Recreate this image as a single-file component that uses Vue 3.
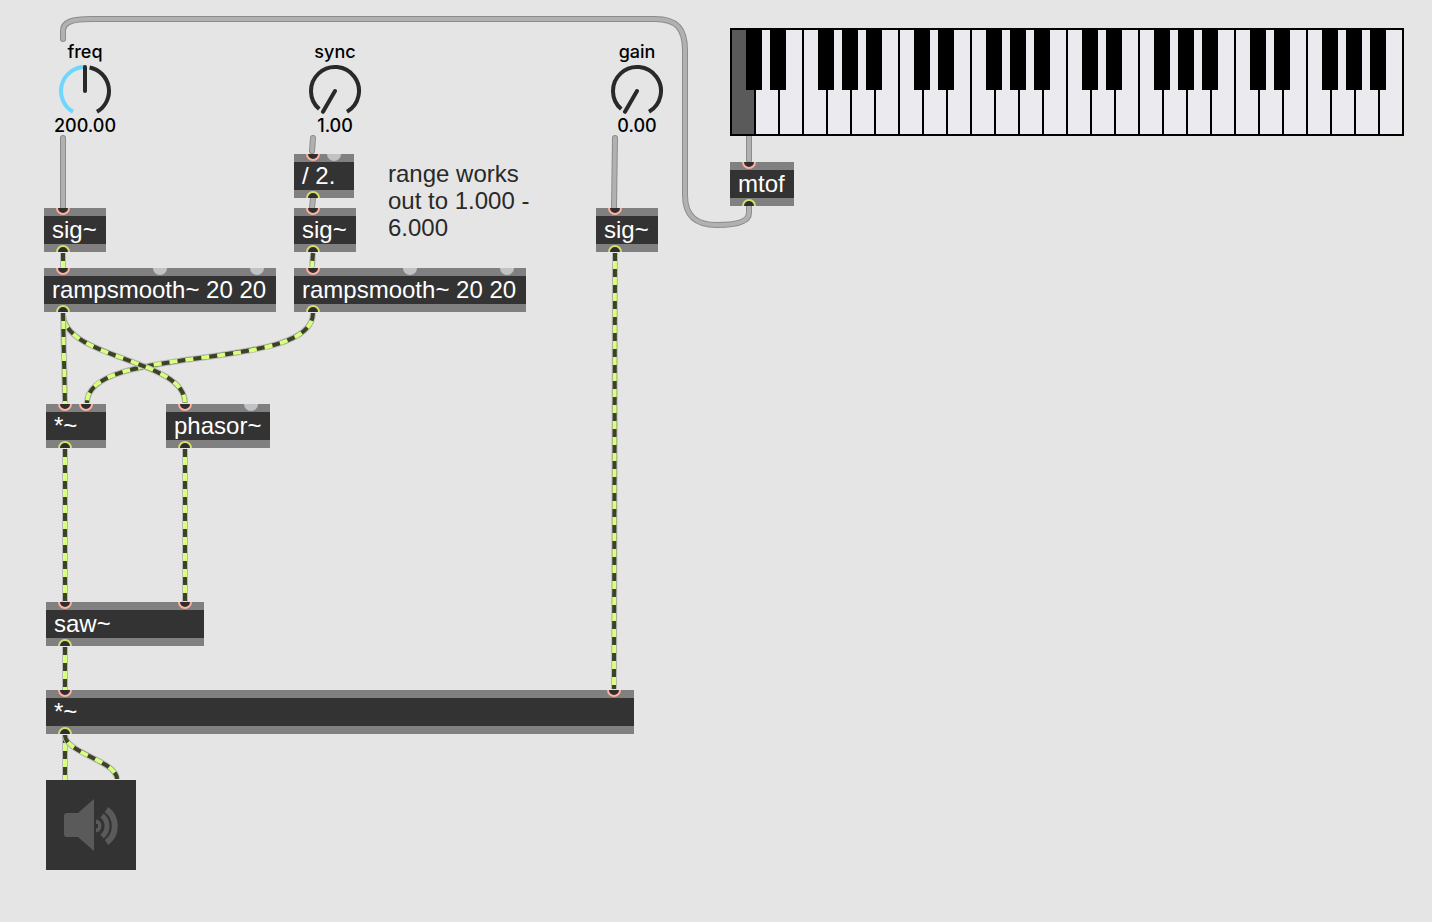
<script setup>
import { ref } from 'vue'

const dials = ref([
  { id: 'freq', x: 43, y: 41, min: 0, max: 400, value: 200 },
  { id: 'sync', x: 293, y: 41, min: 1, max: 11, value: 1 },
  { id: 'gain', x: 595, y: 41, min: 0, max: 1, value: 0 },
])

// Inlets and outlets are distances from the left edge of the box.
const boxes = [
  { text: '/ 2.', x: 294, y: 154, w: 60, ins: [19], idle: [40], outs: [19] },
  { text: 'sig~', x: 44, y: 208, w: 62, ins: [19], idle: [], outs: [19] },
  { text: 'sig~', x: 294, y: 208, w: 62, ins: [19], idle: [], outs: [19] },
  { text: 'sig~', x: 596, y: 208, w: 62, ins: [19], idle: [], outs: [19] },
  { text: 'rampsmooth~ 20 20', x: 44, y: 268, w: 232, ins: [19], idle: [116, 213], outs: [19] },
  { text: 'rampsmooth~ 20 20', x: 294, y: 268, w: 232, ins: [19], idle: [116, 213], outs: [19] },
  { text: '*~', x: 46, y: 404, w: 60, ins: [19, 40], idle: [], outs: [19] },
  { text: 'phasor~', x: 166, y: 404, w: 104, ins: [19], idle: [85], outs: [19] },
  { text: 'saw~', x: 46, y: 602, w: 158, ins: [19, 139], idle: [], outs: [19] },
  { text: '*~', x: 46, y: 690, w: 588, ins: [19, 568], idle: [], outs: [19] },
  { text: 'mtof', x: 730, y: 162, w: 64, ins: [19], idle: [], outs: [19] },
]

const controlCords = [
  'M749 206 V213 C749 222 735 225 717 225 C697 225 685 217 685 195 V50 C685 29 677 19 655 19 H91 C72 19 63 22 63 31 V39',
  'M63 138 V208',
  'M313 138 L312 151',
  'M313 198 L312 208',
  'M615 138 L614 208',
  'M749 130 V160',
]

const signalCords = [
  'M63 253 V268',
  'M313 253 L312 267',
  'M313 313 C313 373 87 343 87 403',
  'M63 313 C63 360 185 358 185 403',
  'M63 313 L65 403',
  'M65 449 V602',
  'M185 449 V602',
  'M65 647 V690',
  'M615 253 L614 689',
  'M65 735 V780',
  'M65 735 C65 753 117 761 117 779',
]

const keyCount = 28
const sharpSteps = [0, 1, 3, 4, 5]
const keys = Array.from({ length: keyCount }, (_, i) => ({
  n: i,
  sharp: sharpSteps.includes(i % 7),
}))
const held = ref(0)
const audioOn = ref(false)

function point(deg) {
  const a = (deg * Math.PI) / 180
  return `${(27 + 24 * Math.sin(a)).toFixed(2)} ${(27 - 24 * Math.cos(a)).toFixed(2)}`
}
function arc(from, to) {
  return `M${point(from)} A24 24 0 ${to - from > 180 ? 1 : 0} 1 ${point(to)}`
}
function angle(d) {
  return -150 + (300 * (d.value - d.min)) / (d.max - d.min)
}
function place(o) {
  return { left: o.x + 'px', top: o.y + 'px', width: o.w ? o.w + 'px' : null }
}
</script>

<template>
  <main class="patcher">
    <svg class="cords" aria-hidden="true">
      <g v-for="d in controlCords" :key="d">
        <path :d="d" class="control-edge" />
        <path :d="d" class="control-core" />
      </g>
      <g v-for="d in signalCords" :key="d">
        <path :d="d" class="signal-edge" />
        <path :d="d" class="signal-core" />
        <path :d="d" class="signal-dash" />
      </g>
    </svg>

    <label v-for="d in dials" :key="d.id" class="dial" :style="place(d)">
      <span>{{ d.id }}</span>
      <svg class="knob" viewBox="0 0 54 50" aria-hidden="true">
        <path :d="arc(angle(d) + 11, 150)" class="track" />
        <path v-if="angle(d) > -150" :d="arc(-150, angle(d))" class="fill" />
        <path :d="`M27 27 L${point(angle(d))}`" class="needle" />
      </svg>
      <output>{{ Number(d.value).toFixed(2) }}</output>
      <input v-model.number="d.value" type="range" :min="d.min" :max="d.max" step="0.01" />
    </label>

    <div v-for="(b, i) in boxes" :key="i" class="box" :style="place(b)">
      <span class="box-text">{{ b.text }}</span>
      <svg class="ports" aria-hidden="true">
        <circle v-for="p in b.idle" :key="'n' + p" :cx="p" cy="0" r="7" class="idle" />
        <circle v-for="p in b.ins" :key="'i' + p" :cx="p" cy="0" r="6" class="inlet" />
        <circle v-for="p in b.outs" :key="'o' + p" :cx="p" cy="44" r="6" class="outlet" />
      </svg>
    </div>

    <p class="comment">range works out to 1.000 - 6.000</p>

    <div class="keyboard">
      <div v-for="k in keys" :key="k.n" class="slot">
        <button
          type="button"
          class="white"
          :class="{ held: held === k.n }"
          :aria-label="'White key ' + (k.n + 1)"
          @click="held = k.n"
        ></button>
        <button v-if="k.sharp" type="button" class="black" :aria-label="'Black key ' + (k.n + 1)"></button>
      </div>
    </div>

    <button
      type="button"
      class="dac"
      aria-label="Audio output"
      :aria-pressed="audioOn"
      @click="audioOn = !audioOn"
    >
      <svg viewBox="0 0 90 90" aria-hidden="true">
        <path class="horn" d="M21 33 H32 L48 19 V71 L32 57 H21 Q18 57 18 54 V36 Q18 33 21 33 Z" />
        <path class="wave outer" d="M60.5 29.5 A20.5 20.5 0 0 1 60.5 62.5" />
        <path class="wave" d="M56 35.5 A13.5 13.5 0 0 1 56 56.5" />
        <path class="horn" d="M50 39.5 A6.6 6.6 0 0 1 50 52.5 V48 H52 V44 H50 Z" />
      </svg>
    </button>
  </main>
</template>

<style>
body {
  background: #e5e5e5;
}
</style>

<style scoped>
.patcher {
  position: relative;
  min-height: 100vh;
  overflow: hidden;
  background: #e5e5e5;
  font-family: "Liberation Sans", Arial, sans-serif;
  font-size: 24px;
}
button {
  display: block;
  padding: 0;
  border: 0;
  border-radius: 0;
  cursor: pointer;
}
.cords {
  position: absolute;
  inset: 0;
  width: 100%;
  height: 100%;
}
.cords path {
  fill: none;
}
.control-edge {
  stroke: #8c8c8c;
  stroke-width: 6;
  stroke-linecap: round;
}
.control-core {
  stroke: #b1b1b1;
  stroke-width: 4;
  stroke-linecap: round;
}
.signal-edge {
  stroke: #b8b8b8;
  stroke-width: 6;
}
.signal-core {
  stroke: #3b4226;
  stroke-width: 4;
}
.signal-dash {
  stroke: #d9ff80;
  stroke-width: 4;
  stroke-dasharray: 0 8 8 0;
}
.dial {
  position: absolute;
  display: flex;
  flex-direction: column;
  align-items: center;
  width: 84px;
  font-family: Inter, sans-serif;
  font-size: 18px;
  font-weight: 500;
  line-height: 22px;
  color: #000;
}
.knob {
  width: 54px;
  height: 50px;
  margin: 1px 0;
}
.knob path {
  fill: none;
  stroke: #292929;
  stroke-width: 4;
}
.knob .fill {
  stroke: #6dd7ff;
}
.knob .needle {
  stroke-linecap: round;
}
.dial input {
  position: absolute;
  inset: 0;
  width: 100%;
  height: 100%;
  margin: 0;
  opacity: 0;
  cursor: pointer;
}
.box {
  position: absolute;
  box-sizing: border-box;
  height: 44px;
  padding: 0 8px;
  border: solid #808080;
  border-width: 8px 0;
  background: #333;
  color: #fff;
  line-height: 28px;
  white-space: nowrap;
}
.ports {
  position: absolute;
  left: 0;
  top: -8px;
  width: 100%;
  height: 44px;
}
.idle {
  fill: #c0c3c6;
}
.inlet,
.outlet {
  fill: #2e2e2e;
  stroke-width: 2;
}
.inlet {
  stroke: #ffb0a0;
}
.outlet {
  stroke: #d6df6b;
}
.comment {
  position: absolute;
  left: 388px;
  top: 160px;
  width: 150px;
  margin: 0;
  line-height: 27px;
  color: #292929;
}
.keyboard {
  position: absolute;
  left: 730px;
  top: 28px;
  display: flex;
  gap: 2px;
  padding: 2px;
  background: #000;
}
.slot {
  position: relative;
}
.white {
  width: 22px;
  height: 104px;
  background: #ebeaef;
}
.white.held {
  background: #5a5a5a;
}
.black {
  position: absolute;
  z-index: 1;
  left: 14px;
  top: 0;
  width: 16px;
  height: 60px;
  background: #000;
}
.dac {
  position: absolute;
  left: 46px;
  top: 780px;
  width: 90px;
  height: 90px;
  background: #333;
}
.dac svg {
  display: block;
}
.horn {
  fill: #5a5a5a;
}
.wave {
  fill: none;
  stroke: #5a5a5a;
  stroke-width: 5;
}
.wave.outer {
  stroke-width: 6;
}
</style>
